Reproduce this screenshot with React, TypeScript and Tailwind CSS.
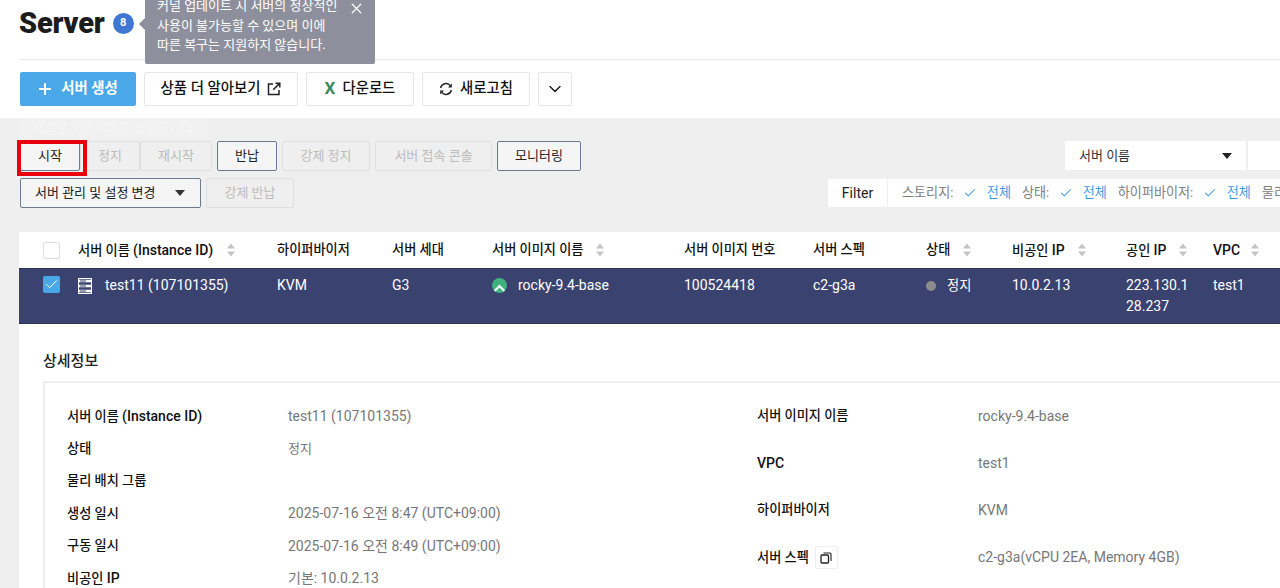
import type { ReactNode } from 'react';
import { Check, ChevronDown, X } from 'lucide-react';

function SortIcon() {
  return (
    <svg width="10" height="14" viewBox="0 0 10 14" className="shrink-0">
      <path d="M5 0.5 L9 5.5 H1 Z" fill="#c4c4c4" />
      <path d="M5 13.5 L9 8.5 H1 Z" fill="#c4c4c4" />
    </svg>
  );
}

function RockyLogo() {
  return (
    <svg width="15" height="15" viewBox="0 0 15 15" className="shrink-0">
      <circle cx="7.5" cy="7.5" r="7.5" fill="#3fb27f" />
      <path d="M2.6 13 L7.5 8 L12.4 13" fill="none" stroke="#eef7f3" strokeWidth="2.2" />
    </svg>
  );
}

function ServerIcon() {
  return (
    <svg width="14" height="16" viewBox="0 0 14 16" className="shrink-0">
      <rect x="0.5" y="0.5" width="13" height="15" fill="#3a4270" stroke="#fff" />
      <path d="M1 3 H13 M1 8 H13 M1 13 H13" stroke="#fff" strokeWidth="2.6" />
      <path d="M2 3 H8 M2 8 H8 M2 13 H8" stroke="#3a4270" strokeWidth="1" />
    </svg>
  );
}

function CopyIcon() {
  return (
    <svg width="12" height="12" viewBox="0 0 12 12">
      <rect x="1" y="3" width="7.5" height="8" rx="1" fill="none" stroke="#222" strokeWidth="1.3" />
      <path d="M3.5 1 H10 A1 1 0 0 1 11 2 V9" fill="none" stroke="#222" strokeWidth="1.1" />
    </svg>
  );
}

function LinkOutIcon() {
  return (
    <svg width="14" height="14" viewBox="0 0 14 14" className="shrink-0">
      <path d="M6 2 H1.5 V12.5 H12 V8" fill="none" stroke="#222" strokeWidth="1.5" />
      <path d="M8.5 1.2 H12.8 V5.5 M12.6 1.4 L6.2 7.8" fill="none" stroke="#222" strokeWidth="1.5" />
    </svg>
  );
}

function RefreshIcon() {
  return (
    <svg width="14" height="14" viewBox="0 0 14 14" className="shrink-0">
      <path d="M1.6 6 A5.5 5.5 0 0 1 11.4 3.8" fill="none" stroke="#222" strokeWidth="1.4" />
      <path d="M12.4 8 A5.5 5.5 0 0 1 2.6 10.2" fill="none" stroke="#222" strokeWidth="1.4" />
      <path d="M12.8 1.6 V5.4 H9 Z" fill="#222" />
      <path d="M1.2 12.4 V8.6 H5 Z" fill="#222" />
    </svg>
  );
}

function PlusIcon() {
  return (
    <svg width="14" height="14" viewBox="0 0 14 14" className="shrink-0">
      <path d="M7 1 V13 M1 7 H13" stroke="#fff" strokeWidth="2" />
    </svg>
  );
}

function ActionButton({ label, enabled, className }: { label: string; enabled?: boolean; className: string }) {
  return (
    <button
      className={
        enabled
          ? `h-[30px] rounded-[2px] border border-[#6b7a90] bg-[#f5f5f5] text-[13px] text-[#222] ${className}`
          : `h-[30px] rounded-[2px] border border-[#dfdfe2] text-[13px] text-[#bcbcbc] ${className}`
      }
    >
      {label}
    </button>
  );
}

function TopButton({ children, className }: { children: ReactNode; className: string }) {
  return (
    <button className={`flex h-[34px] items-center justify-center rounded-[2px] border border-[#e6e6e6] bg-white text-[14.4px] font-medium text-[#111] ${className}`}>
      {children}
    </button>
  );
}

function FilterItem({ label }: { label: string }) {
  return (
    <div className="flex shrink-0 items-center">
      <span className="text-[#808080]">{label}:</span>
      <Check size={14} strokeWidth={1.8} className="ml-[10px] text-[#3d9be3]" />
      <span className="ml-[9.5px] text-[#3d9be3]">전체</span>
    </div>
  );
}

// Latin parts of a label sit a little larger than the Korean around them
function Latin({ children }: { children: ReactNode }) {
  return <span className="text-[14px]">{children}</span>;
}

function DetailRow({ label, value, className, children }: { label: ReactNode; value?: ReactNode; className: string; children?: ReactNode }) {
  return (
    <div className={`flex items-center ${className}`}>
      <div className="flex w-[221px] shrink-0 items-center whitespace-pre text-[13.2px] font-medium text-[#111]">
        {label}
        {children}
      </div>
      <div className="text-[14px] text-[#777]">{value}</div>
    </div>
  );
}

const headerCols = 'grid grid-cols-[59px_199px_115px_100px_192px_129px_113px_86px_114px_87px_100px]';

export default function App() {
  return (
    <div className="relative flex h-[588px] w-[1280px] flex-col overflow-hidden bg-white font-['Roboto','Noto_Sans_CJK_KR',sans-serif]">
      <div className="ml-[19px] flex h-[60px] shrink-0 items-center border-b border-[#e8e8e8] pb-[12px]">
        <h1 className="text-[29px] leading-none font-black tracking-[-0.2px] text-[#1c1c1c]">Server</h1>
        <span className="ml-[8px] flex h-[21px] w-[21px] items-center justify-center rounded-full bg-[#3f76d3] text-[11px] font-bold text-white">8</span>
      </div>

      {/* tooltip over the header */}
      <div className="absolute top-[-6px] left-[145px] z-10 h-[70px] w-[230px] rounded-[2px] bg-[#8d909c] pt-[2px] pl-[12px] text-[13px] leading-[19.5px] text-white">
        <span className="absolute top-[24px] left-[-6px] h-0 w-0 border-y-[6px] border-r-[6px] border-y-transparent border-r-[#8d909c]" />
        <X size={17} strokeWidth={1.8} className="absolute top-[6px] right-[10px]" />
        <p>커널 업데이트 시 서버의 정상적인</p>
        <p>사용이 불가능할 수 있으며 이에</p>
        <p>따른 복구는 지원하지 않습니다.</p>
      </div>

      <div className="flex h-[58px] shrink-0 gap-2 pt-[12px] pl-[20px]">
        <button className="flex h-[34px] w-[116px] items-center justify-center gap-[9px] rounded-[2px] bg-[#4aa8e8] text-[14.4px] font-bold text-white">
          <PlusIcon />
          서버 생성
        </button>
        <TopButton className="w-[154px] gap-[7px]">
          상품 더 알아보기
          <LinkOutIcon />
        </TopButton>
        <TopButton className="w-[108px] gap-[7px]">
          <span className="text-[17px] font-bold text-[#3e8a5c]">X</span>
          다운로드
        </TopButton>
        <TopButton className="w-[108px] gap-[7px]">
          <RefreshIcon />
          새로고침
        </TopButton>
        <TopButton className="w-[34px]">
          <ChevronDown size={20} strokeWidth={1.6} />
        </TopButton>
      </div>

      <div className="relative flex min-h-0 flex-1 flex-col bg-[#efefef] pl-[19px]">
        {/* fading hint left over from the create button */}
        <div className="absolute top-0 left-[20px] flex h-[20px] w-[190px] items-center justify-center bg-[#f1f1f1] text-[13px] text-[#f5f5f5]">
          새로운 VM 서버를 생성합니다.
        </div>

        <div className="flex h-[114px] shrink-0 justify-between pt-[23px]">
          <div className="flex flex-col gap-[7px]">
            <div className="flex">
              <div className="relative ml-px">
                <button className="h-[30px] w-[60px] rounded-[2px] border border-[#6b7a90] bg-[#f5f5f5] text-[13px] text-[#222]">시작</button>
                <span className="absolute top-[-1px] left-[-3px] h-[36px] w-[70px] border-[4px] border-[#e8000d]" />
              </div>
              <ActionButton label="정지" className="w-[60px]" />
              <ActionButton label="재시작" className="mr-[5px] w-[72px]" />
              <ActionButton label="반납" enabled className="mr-[5px] w-[60px]" />
              <ActionButton label="강제 정지" className="mr-[5px] w-[88px]" />
              <ActionButton label="서버 접속 콘솔" className="mr-[5px] w-[117px]" />
              <ActionButton label="모니터링" enabled className="w-[84px]" />
            </div>
            <div className="flex gap-[5px] pl-px">
              <button className="flex h-[30px] w-[181px] items-center justify-between rounded-[2px] border border-[#6b7a90] bg-[#f5f5f5] pr-[15px] pl-[14px] text-[13px] text-[#222]">
                서버 관리 및 설정 변경
                <span className="h-0 w-0 border-x-[5px] border-t-[6px] border-x-transparent border-t-[#333]" />
              </button>
              <ActionButton label="강제 반납" className="w-[88px]" />
            </div>
          </div>
          <div className="flex w-[452px] shrink-0 flex-col items-end gap-[9px] overflow-hidden">
            <div className="flex h-[29px] w-[215px] shrink-0 gap-[2px] self-end">
              <div className="flex w-[181px] shrink-0 items-center justify-between bg-white px-[14px] text-[13px] text-[#333]">
                서버 이름
                <span className="h-0 w-0 border-x-[5px] border-t-[6px] border-x-transparent border-t-[#222]" />
              </div>
              <div className="flex-1 bg-white" />
            </div>
            <div className="flex h-[28px] w-[452px] shrink-0 gap-px text-[13.1px]">
              <div className="flex w-[59px] shrink-0 items-center justify-center bg-white text-[14px] text-[#222]">Filter</div>
              <div className="flex flex-1 items-center gap-[11px] overflow-hidden bg-white pl-[14px]">
                <FilterItem label="스토리지" />
                <FilterItem label="상태" />
                <FilterItem label="하이퍼바이저" />
                <span className="shrink-0 text-[#808080]">물리 배치 그룹:</span>
              </div>
            </div>
          </div>
        </div>

        <div className="flex min-h-0 flex-1 flex-col bg-white">
          <div className={`${headerCols} h-[36px] shrink-0 items-center text-[13.2px] font-medium text-[#111]`}>
            <div className="pl-[24px]">
              <div className="h-[17px] w-[17px] rounded-[2px] border border-[#dedede] bg-white" />
            </div>
            <div className="flex items-center gap-[13px]"><span>서버 이름 <Latin>(Instance ID)</Latin></span> <SortIcon /></div>
            <div>하이퍼바이저</div>
            <div>서버 세대</div>
            <div className="flex items-center gap-[12px]">서버 이미지 이름 <SortIcon /></div>
            <div>서버 이미지 번호</div>
            <div>서버 스펙</div>
            <div className="flex items-center gap-[12px]">상태 <SortIcon /></div>
            <div className="flex items-center gap-[12px]"><span>비공인 <Latin>IP</Latin></span> <SortIcon /></div>
            <div className="flex items-center gap-[12px]"><span>공인 <Latin>IP</Latin></span> <SortIcon /></div>
            <div className="flex items-center gap-[10px]"><Latin>VPC</Latin> <SortIcon /></div>
          </div>

          <div className={`${headerCols} h-[56px] shrink-0 border-y border-[#2b3358] bg-[#3a4270] pt-[6px] text-[14px] leading-[21px] text-white`}>
            <div className="pt-px pl-[24px]">
              <div className="flex h-[17px] w-[17px] items-center justify-center rounded-[2px] bg-[#4aa8e8]">
                <Check size={15} strokeWidth={1.6} />
              </div>
            </div>
            <div className="flex h-[21px] items-center gap-[13px]"><ServerIcon /> test11 (107101355)</div>
            <div>KVM</div>
            <div>G3</div>
            <div className="flex h-[21px] items-center gap-[11px]"><RockyLogo /> rocky-9.4-base</div>
            <div>100524418</div>
            <div>c2-g3a</div>
            <div className="flex h-[21px] items-center gap-[11px] text-[13.2px]">
              <span className="h-[10px] w-[10px] rounded-full bg-[#8d8d8d]" />
              정지
            </div>
            <div>10.0.2.13</div>
            <div className="w-[66px] break-all">223.130.128.237</div>
            <div>test1</div>
          </div>

          <div className="flex min-h-0 flex-1 flex-col pt-[26px] pl-[24px]">
            <h2 className="h-[22px] shrink-0 text-[15px] leading-[22px] font-medium text-[#222]">상세정보</h2>
            <div className="mt-[9px] flex flex-1 border-t-2 border-l-2 border-[#eeeeee] pt-[17px] pl-[22px]">
              <div className="flex w-[690px] shrink-0 flex-col">
                <DetailRow label={<span>서버 이름 <Latin>(Instance ID)</Latin></span>} value="test11 (107101355)" className="h-[32.5px]" />
                <DetailRow label="상태" value={<span className="text-[13px]">정지</span>} className="h-[32.5px]" />
                <DetailRow label="물리 배치 그룹" className="h-[32.5px]" />
                <DetailRow label="생성 일시" value="2025-07-16 오전 8:47 (UTC+09:00)" className="h-[32.5px]" />
                <DetailRow label="구동 일시" value="2025-07-16 오전 8:49 (UTC+09:00)" className="h-[32.5px]" />
                <DetailRow label={<span>비공인 <Latin>IP</Latin></span>} value="기본: 10.0.2.13" className="h-[32.5px]" />
              </div>
              <div className="flex flex-col">
                <DetailRow label="서버 이미지 이름" value="rocky-9.4-base" className="mb-[15px] h-[32.5px]" />
                <DetailRow label={<Latin>VPC</Latin>} value="test1" className="mb-[14px] h-[32.5px]" />
                <DetailRow label="하이퍼바이저" value="KVM" className="mb-[15px] h-[32.5px]" />
                <DetailRow label="서버 스펙" value="c2-g3a(vCPU 2EA, Memory 4GB)" className="h-[32.5px]">
                  <span className="ml-[6px] flex h-[23px] w-[23px] items-center justify-center rounded-[2px] border border-[#eeeeee] bg-white">
                    <CopyIcon />
                  </span>
                </DetailRow>
              </div>
            </div>
          </div>
        </div>
      </div>
    </div>
  );
}
